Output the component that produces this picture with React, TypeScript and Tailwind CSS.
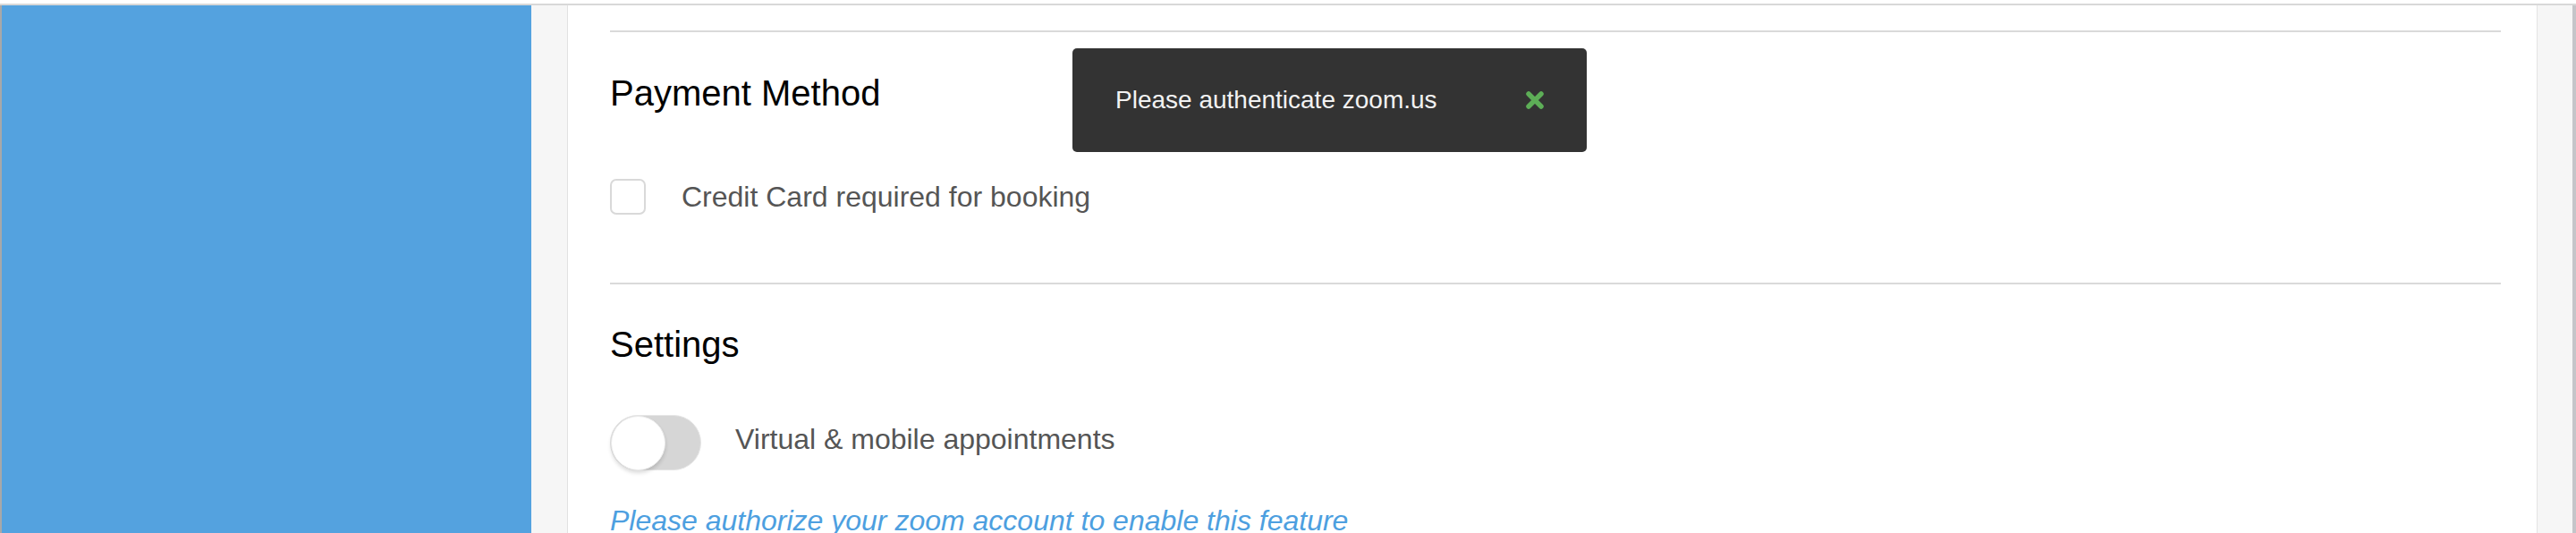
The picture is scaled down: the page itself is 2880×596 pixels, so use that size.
import React from 'react'

function CloseIcon() {
  return (
    <svg width="20" height="20" viewBox="0 0 20 20" className="block">
      <path
        d="M3 3 L17 17 M17 3 L3 17"
        stroke="#5dae57"
        strokeWidth="5.5"
        strokeLinecap="round"
        fill="none"
      />
    </svg>
  )
}

function Toggle() {
  return (
    <div className="relative w-[102px] h-[62px] shrink-0 rounded-full bg-[#d6d6d6] border border-[#e6e6e6]">
      <div className="absolute left-0 top-0 w-[61px] h-[61px] rounded-full bg-white border border-[#ececec] shadow-[0_3px_4px_rgba(0,0,0,0.14)]" />
    </div>
  )
}

export default function App() {
  return (
    <div className="relative w-[2880px] h-[596px] overflow-hidden bg-white font-['Liberation_Sans',Arial,sans-serif]">
      <div className="h-[4px] bg-white" />
      <div className="h-[2px] bg-[#d8d8d8]" />

      <div className="flex h-[590px]">
        <div className="w-[2px] bg-[#a8a8a8]" />
        <div className="w-[592px] bg-[#54a2df]" />
        <div className="w-[40px] bg-[#f6f6f6]" />

        <main className="w-[2202px] bg-white border-l border-[#e2e2e2] pl-[47px] pr-[40px] pt-[28px]">
          <div className="h-[2px] bg-[#dadada]" />

          <h2 className="mt-[44px] text-[40px] leading-[48px] text-black font-normal">Payment Method</h2>

          <label className="mt-[72px] flex h-[40px] items-center gap-[40px]">
            <span className="w-[40px] h-[40px] rounded-[7px] border-2 border-[#d9d9d9] bg-white shrink-0" />
            <span className="text-[32px] leading-[38px] text-[#555555]">Credit Card required for booking</span>
          </label>

          <div className="mt-[76px] h-[2px] bg-[#dadada]" />

          <h2 className="mt-[43px] text-[40px] leading-[48px] text-black font-normal">Settings</h2>

          <div className="mt-[55px] flex items-start gap-[38px]">
            <Toggle />
            <span className="mt-[8px] text-[32px] leading-[38px] text-[#555555]">Virtual &amp; mobile appointments</span>
          </div>

          <p className="mt-[37px] text-[32px] leading-[38px] italic text-[#4d9fe0]">
            Please authorize your zoom account to enable this feature
          </p>
        </main>

        <div className="w-[40px] bg-[#f6f6f6] border-l border-[#e4e4e4]" />
        <div className="w-[4px] bg-[#c5c5c9]" />
      </div>

      <div className="absolute left-[1199px] top-[54px] w-[575px] h-[116px] rounded-[5px] bg-[#333333] flex items-center justify-between pl-[48px] pr-[48px]">
        <span className="text-[28px] leading-[34px] text-[#f2f2f2]">Please authenticate zoom.us</span>
        <CloseIcon />
      </div>
    </div>
  )
}
